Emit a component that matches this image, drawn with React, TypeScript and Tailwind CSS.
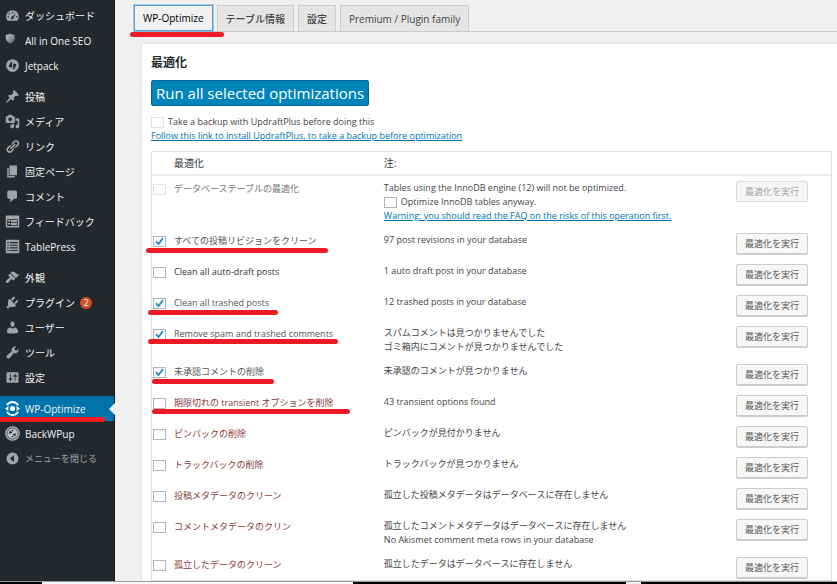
import React, { useState } from "react";

type MenuItem = {
  label: string;
  icon: React.ReactNode;
  badge?: number;
  active?: boolean;
  muted?: boolean;
};

type Optimization = {
  id: string;
  label: string;
  notes: string[];
  tone: string;
  mark?: string;
};

const Icon = ({ d }: { d: string }) => (
  <svg viewBox="0 0 20 20" className="size-[15px] shrink-0" fill="currentColor" fillRule="evenodd" aria-hidden="true">
    <path d={d} />
  </svg>
);

const menuGroups: MenuItem[][] = [
  [
    {
      label: "ダッシュボード",
      icon: (
        <Icon d="M3.8 17h12.4A8.3 8.3 0 0 0 18.5 11.5 8.5 8.5 0 0 0 1.5 11.5c0 2.1.9 4 2.3 5.5zM10 5a1 1 0 1 1 0 2 1 1 0 0 1 0-2zM5.8 6.8a1 1 0 1 1 0 2 1 1 0 0 1 0-2zM14.5 6.5l-3 6a1.8 1.8 0 1 1-1.7-1.2zM4.2 10.8a1 1 0 1 1 0 2 1 1 0 0 1 0-2zM15.8 10.8a1 1 0 1 1 0 2 1 1 0 0 1 0-2z" />
      ),
    },
    {
      label: "All in One SEO",
      icon: (
        <svg viewBox="0 0 20 20" className="size-[15px] shrink-0" aria-hidden="true">
          <defs>
            <linearGradient id="shield" x1="0" y1="0" x2="1" y2="1">
              <stop offset="0" stopColor="#c4c6c8" />
              <stop offset="1" stopColor="#5c6064" />
            </linearGradient>
          </defs>
          <path d="M1 2.5Q4 2.5 7 1Q10 2.5 13 2.5V7q0 4-6 7Q1 11 1 7z" fill="url(#shield)" />
        </svg>
      ),
    },
    {
      label: "Jetpack",
      icon: (
        <Icon d="M10 1.5a8.5 8.5 0 1 1 0 17 8.5 8.5 0 0 1 0-17zM9.3 4.5L7.6 5.5 5 10.8q-.4 1 .6 1.2l3.7.8zM10.8 15.5l1.6-1L15 9.2q.4-1-.6-1.2l-3.6-.8z" />
      ),
    },
  ],
  [
    {
      label: "投稿",
      icon: (
        <Icon d="M10.44 3.02l1.82-1.82 6.36 6.35-1.83 1.82c-1.05-.68-2.48-.57-3.41.36l-.75.75c-.92.93-1.04 2.35-.35 3.41l-1.83 1.82-2.41-2.41-2.8 2.79c-.42.42-3.38 2.71-3.8 2.29s1.86-3.39 2.28-3.81l2.79-2.79L4.1 9.36l1.83-1.82c1.05.69 2.48.57 3.4-.36l.75-.75c.93-.92 1.05-2.35.36-3.41z" />
      ),
    },
    {
      label: "メディア",
      icon: (
        <Icon d="M13 11V4c0-.55-.45-1-1-1h-1.67L9 1H5L3.67 3H2c-.55 0-1 .45-1 1v7c0 .55.45 1 1 1h10c.55 0 1-.45 1-1zM7 4.5c1.38 0 2.5 1.12 2.5 2.5S8.38 9.5 7 9.5 4.5 8.38 4.5 7 5.62 4.5 7 4.5zM14 6h5v10.5c0 1.38-1.12 2.5-2.5 2.5S14 17.88 14 16.5s1.12-2.5 2.5-2.5c.17 0 .34.02.5.05V9h-3V6zm-4 8.05V13h2v3.5c0 1.38-1.12 2.5-2.5 2.5S7 17.88 7 16.5 8.12 14 9.5 14c.17 0 .34.02.5.05z" />
      ),
    },
    {
      label: "リンク",
      icon: (
        <Icon d="M17.74 2.76c1.68 1.69 1.68 4.41 0 6.1l-1.53 1.52c-1.12 1.12-2.7 1.47-4.14 1.09l2.62-2.61.76-.77.76-.76c.84-.84.84-2.2 0-3.04-.84-.85-2.2-.85-3.04 0l-.77.76-3.38 3.38c-.37-1.44-.02-3.02 1.1-4.14l1.52-1.53c1.69-1.68 4.42-1.68 6.1 0zM8.59 13.43l5.34-5.34c.42-.42.42-1.1 0-1.52-.44-.43-1.13-.39-1.53 0l-5.33 5.34c-.42.42-.42 1.1 0 1.52.44.43 1.13.39 1.52 0zm-.76 2.29l4.14-4.15c.38 1.44.03 3.02-1.09 4.14l-1.52 1.53c-1.69 1.68-4.41 1.68-6.1 0-1.68-1.68-1.68-4.42 0-6.1l1.53-1.52c1.12-1.12 2.7-1.47 4.14-1.1l-4.14 4.15c-.85.84-.85 2.2 0 3.05.84.84 2.2.84 3.04 0z" />
      ),
    },
    { label: "固定ページ", icon: <Icon d="M6 15V2h10v13H6zm-1 1h8v2H3V5h2v11z" /> },
    {
      label: "コメント",
      icon: <Icon d="M5 2h9c1.1 0 2 .9 2 2v7c0 1.1-.9 2-2 2h-2l-5 5v-5H5c-1.1 0-2-.9-2-2V4c0-1.1.9-2 2-2z" />,
    },
    {
      label: "フィードバック",
      icon: (
        <Icon d="M2 2h16c.55 0 1 .45 1 1v14c0 .55-.45 1-1 1H2c-.55 0-1-.45-1-1V3c0-.55.45-1 1-1zm15 14V7H3v9h14zM4 8v2h3V8H4zm4 0v3h8V8H8zm-4 4v2h3v-2H4zm4 0v3h8v-3H8z" />
      ),
    },
    {
      label: "TablePress",
      icon: (
        <Icon d="M2 1h16l1 1v16l-1 1H2l-1-1V2zM3 4v1.5h2V4zM6.5 4v1.5H17V4zM3 7.5V9h2V7.5zM6.5 7.5V9H17V7.5zM3 11v1.5h2V11zM6.5 11v1.5H17V11zM3 14.5V16h2v-1.5zM6.5 14.5V16H17v-1.5z" />
      ),
    },
  ],
  [
    {
      label: "外観",
      icon: (
        <Icon d="M14.48 11.06L7.41 3.99l1.5-1.5c.5-.56 2.3-.47 3.51.32 1.21.8 1.43 1.28 2.91 2.1 1.18.64 2.45 1.26 4.45.85zm-.71.71L6.7 4.7 4.93 6.47c-.39.39-.39 1.02 0 1.41l1.06 1.06c.39.39.39 1.03 0 1.42-.6.6-1.43 1.11-2.21 1.69-.35.26-.7.53-1.01.84C1.43 14.23.4 16.08 1.4 17.07c.99 1 2.84-.03 4.18-1.36.31-.31.58-.66.85-1.02.57-.78 1.08-1.61 1.69-2.21.39-.39 1.02-.39 1.41 0l1.06 1.06c.39.39 1.02.39 1.41 0z" />
      ),
    },
    {
      label: "プラグイン",
      badge: 2,
      icon: (
        <Icon d="M13.11 4.36L9.87 7.6 8 5.73l3.24-3.24c.35-.34 1.05-.2 1.56.32.52.51.66 1.21.31 1.55zm-8 1.77l.91-1.12 9.01 9.01-1.19.84c-.71.71-2.63 1.16-3.82 1.16H6.14L4.9 17.26c-.59.59-1.54.59-2.12 0-.59-.58-.59-1.53 0-2.12l1.24-1.24v-3.88c0-1.13.4-3.19 1.09-3.89zm7.26 3.97l3.24-3.24c.34-.35 1.04-.21 1.55.31.52.51.66 1.21.31 1.55l-3.24 3.25z" />
      ),
    },
    {
      label: "ユーザー",
      icon: (
        <Icon d="M10 9.25c-2.27 0-2.73-3.44-2.73-3.44C7 4.02 7.82 2 9.97 2c2.16 0 2.98 2.02 2.71 3.81 0 0-.41 3.44-2.68 3.44zm0 2.57L12.72 10c2.39 0 4.52 2.33 4.52 4.53v2.49s-3.65 1.13-7.24 1.13c-3.65 0-7.24-1.13-7.24-1.13v-2.49c0-2.25 1.94-4.48 4.47-4.48z" />
      ),
    },
    {
      label: "ツール",
      icon: (
        <Icon d="M16.68 9.77c-1.34 1.34-3.3 1.67-4.95.99l-5.41 6.52c-.99.99-2.59.99-3.58 0s-.99-2.59 0-3.57l6.52-5.42c-.68-1.65-.35-3.61.99-4.95 1.28-1.28 3.12-1.62 4.72-1.06l-2.89 2.89 2.82 2.82 2.86-2.87c.53 1.58.18 3.39-1.08 4.65z" />
      ),
    },
    {
      label: "設定",
      icon: (
        <Icon d="M18 16V4c0-.55-.45-1-1-1H3c-.55 0-1 .45-1 1v12c0 .55.45 1 1 1h14c.55 0 1-.45 1-1zM8 11h1c.55 0 1 .45 1 1s-.45 1-1 1H8v1.5c0 .28-.22.5-.5.5s-.5-.22-.5-.5V13H6c-.55 0-1-.45-1-1s.45-1 1-1h1V5.5c0-.28.22-.5.5-.5s.5.22.5.5V11zm5-2h-1c-.55 0-1-.45-1-1s.45-1 1-1h1V5.5c0-.28.22-.5.5-.5s.5.22.5.5V7h1c.55 0 1 .45 1 1s-.45 1-1 1h-1v5.5c0 .28-.22.5-.5.5s-.5-.22-.5-.5V9z" />
      ),
    },
  ],
  [
    {
      label: "WP-Optimize",
      active: true,
      icon: (
        <svg viewBox="0 0 20 20" className="size-[15px] shrink-0" fill="none" stroke="currentColor" strokeWidth="2.4" aria-hidden="true">
          <path d="M2.5 5.5A8.8 8.8 0 0 1 17.5 5.5M17.5 14.5A8.8 8.8 0 0 1 2.5 14.5" />
          <path d="M0 10L5 6.2Q3.600 10 5 13.8zM20 10L15 6.2Q16.400 10 15 13.8z" fill="currentColor" stroke="none" />
          <circle cx="10" cy="10" r="3.4" fill="currentColor" stroke="none" />
        </svg>
      ),
    },
    {
      label: "BackWPup",
      icon: (
        <svg viewBox="0 0 20 20" className="size-[15px] shrink-0" aria-hidden="true">
          <circle cx="10" cy="10" r="9" fill="#6f7377" stroke="#b4b7ba" strokeWidth="1.5" />
          <circle cx="10" cy="10" r="6.5" fill="#c3c5c7" />
          <path d="M5 10.5L6.5 6l3.5 3zM8 5.5l3.5-.5-1 2.5zM15 9.5L13.5 14 10 11zM12 14.5l-3.5.5 1-2.5z" fill="#23282d" />
        </svg>
      ),
    },
    {
      label: "メニューを閉じる",
      muted: true,
      icon: <Icon d="M10 2a8 8 0 1 1 0 16 8 8 0 0 1 0-16zM12 5.5L6.5 10l5.5 4.5z" />,
    },
  ],
];

const tabs = ["WP-Optimize", "テーブル情報", "設定", "Premium / Plugin family"];

const optimizations: Optimization[] = [
  { id: "tables", label: "データベーステーブルの最適化", notes: ["Tables using the InnoDB engine (12) will not be optimized."], tone: "text-[#777]" },
  { id: "revisions", label: "すべての投稿リビジョンをクリーン", notes: ["97 post revisions in your database"], tone: "text-[#555]", mark: "top-[20px] -left-1.5 w-[182px]" },
  { id: "autodraft", label: "Clean all auto-draft posts", notes: ["1 auto draft post in your database"], tone: "text-[#333]" },
  { id: "trash", label: "Clean all trashed posts", notes: ["12 trashed posts in your database"], tone: "text-[#555]", mark: "top-[20px] -left-1 w-[130px]" },
  { id: "spam", label: "Remove spam and trashed comments", notes: ["スパムコメントは見つかりませんでした", "ゴミ箱内にコメントが見つかりませんでした"], tone: "text-[#555]", mark: "top-[18px] -left-1 w-[190px]" },
  { id: "unapproved", label: "未承認コメントの削除", notes: ["未承認のコメントが見つかりません"], tone: "text-[#555]", mark: "top-[20px] left-0 w-[122px]" },
  { id: "transient", label: "期限切れの transient オプションを削除", notes: ["43 transient options found"], tone: "text-[#8b3a3a]", mark: "top-[19px] left-0 w-[198px]" },
  { id: "pingbacks", label: "ピンバックの削除", notes: ["ピンバックが見付かりません"], tone: "text-[#8b3a3a]" },
  { id: "trackbacks", label: "トラックバックの削除", notes: ["トラックバックが見つかりません"], tone: "text-[#8b3a3a]" },
  { id: "postmeta", label: "投稿メタデータのクリーン", notes: ["孤立した投稿メタデータはデータベースに存在しません"], tone: "text-[#8b3a3a]" },
  { id: "commentmeta", label: "コメントメタデータのクリン", notes: ["孤立したコメントメタデータはデータベースに存在しません", "No Akismet comment meta rows in your database"], tone: "text-[#8b3a3a]" },
  { id: "orphandata", label: "孤立したデータのクリーン", notes: ["孤立したデータはデータベースに存在しません"], tone: "text-[#8b3a3a]" },
];

type CheckProps = {
  id: string;
  checked: boolean;
  onChange: () => void;
  faded?: boolean;
};

const Check = ({ id, checked, onChange, faded }: CheckProps) => (
  <span className="relative flex shrink-0">
    <input
      id={id}
      type="checkbox"
      checked={checked}
      disabled={faded}
      onChange={onChange}
      className="h-[11px] w-[13px] appearance-none border border-[#b0b4b8] bg-white disabled:border-[#e4e4e4]"
    />
    {checked && (
      <svg viewBox="0 0 13 11" className="pointer-events-none absolute inset-0 size-full" fill="none" stroke="#1e8cbe" strokeWidth="1.8" aria-hidden="true">
        <path d="M3 5.2L5.5 8L10 2" />
      </svg>
    )}
  </span>
);

export default function App() {
  const [selected, setSelected] = useState<string[]>(["revisions", "trash", "spam", "unapproved"]);
  const [activeTab, setActiveTab] = useState("WP-Optimize");
  const [forceInnoDB, setForceInnoDB] = useState(false);

  const toggle = (id: string) => {
    setSelected((prev) => (prev.includes(id) ? prev.filter((s) => s !== id) : [...prev, id]));
  };

  return (
    <div className="flex min-h-screen flex-col bg-[#f0f0f0] font-['Open_Sans','Noto_Sans_CJK_JP',sans-serif] text-[9px] leading-[14px] text-[#444]">
      <div className="flex flex-1">
        {/* Admin menu */}
        <nav className="flex w-[115px] shrink-0 flex-col gap-1.5 border-r border-[#15181b] bg-[#23282d] pt-[3px]">
          {menuGroups.map((group, i) => (
            <ul key={i}>
              {group.map((item) => (
                <li key={item.label} className="relative">
                  <a
                    href="#"
                    className={`flex h-[25px] items-center gap-[5px] pl-[5px] whitespace-nowrap ${
                      item.active ? "bg-[#0073aa] text-white" : "text-[#a0a5aa]"
                    }`}
                  >
                    {item.icon}
                    <span className={item.muted ? "text-[9px] text-[#a0a5aa]" : "text-[10px] text-[#f3f3f3]"}>
                      {item.label}
                    </span>
                    {item.badge && (
                      <span className="flex size-3 items-center justify-center rounded-full bg-[#d54e21] text-[9px] text-white">
                        {item.badge}
                      </span>
                    )}
                  </a>
                  {item.active && (
                    <>
                      <span className="absolute top-[7px] right-[-1px] border-y-[6px] border-r-[6px] border-y-transparent border-r-[#f0f0f0]" />
                      <span className="absolute top-[21px] left-0 h-[5px] w-[105px] rounded-r-full bg-[#ed1c24]" />
                    </>
                  )}
                </li>
              ))}
            </ul>
          ))}
        </nav>

        <main className="min-w-0 flex-1">
          {/* Tabs */}
          <div className="relative ml-[19px] flex h-8 items-end gap-1 border-b border-[#ccc]">
            {tabs.map((tab) => (
              <button
                key={tab}
                type="button"
                onClick={() => setActiveTab(tab)}
                className={`h-[26px] border px-2 text-[10px] font-medium whitespace-nowrap ${
                  activeTab === tab
                    ? "border-[#5b9dd9] bg-[#f1f1f1] text-black ring-1 ring-[#5b9dd9]/50"
                    : "border-b-0 border-[#ccc] bg-[#e5e5e5] text-[#444]"
                }`}
              >
                {tab}
              </button>
            ))}
            <span className="absolute top-8 -left-1 h-[5px] w-[94px] rounded-full bg-[#ed1c24]" />
          </div>

          <section className="mt-[11px] ml-[26px] h-[calc(100%-43px)] border-t border-l border-[#e5e5e5] bg-white pt-2.5 pr-[5px] pl-[9px]">
            <h3 className="text-[12px] leading-[18px] font-semibold text-[#23282d]">最適化</h3>
            <button
              type="button"
              className="mt-2 flex h-[26px] items-center rounded-xs border border-[#006799] bg-[#0085ba] px-1 text-[15px] text-white"
            >
              Run all selected optimizations
            </button>
            <div className="mt-[9px] flex items-center gap-1">
              <Check id="backup" checked={false} onChange={() => {}} faded />
              <label htmlFor="backup">Take a backup with UpdraftPlus before doing this</label>
            </div>
            <a href="#" className="block text-[#0073aa] underline">
              Follow this link to install UpdraftPlus, to take a backup before optimization
            </a>

            {/* Optimizations */}
            <table className="mt-2 w-full table-fixed border-separate border-spacing-0 border border-[#e1e1e1]">
              <thead className="text-left text-[10px] text-[#32373c]">
                <tr className="h-6">
                  <th className="w-[34%] border-b-2 border-[#ececec] pl-[22px] font-normal">最適化</th>
                  <th className="border-b-2 border-[#ececec] pl-px font-normal">注:</th>
                  <th className="w-[95px] border-b-2 border-[#ececec]" />
                </tr>
              </thead>
              <tbody>
                {optimizations.map((item) => {
                  const disabled = item.id === "tables";
                  return (
                    <tr key={item.id} className="group align-top">
                      <td className="relative pt-1.5 pl-px">
                        <div className="flex items-center gap-2 whitespace-nowrap">
                          <Check
                            id={item.id}
                            checked={selected.includes(item.id)}
                            onChange={() => toggle(item.id)}
                            faded={disabled}
                          />
                          <label htmlFor={item.id} className={item.tone}>
                            {item.label}
                          </label>
                        </div>
                        {item.mark && (
                          <span className={`pointer-events-none absolute h-[5px] rounded-full bg-[#ed1c24] ${item.mark}`} />
                        )}
                      </td>
                      <td className="py-[5px] pl-px group-last:pb-0.5">
                        {item.notes.map((note) => (
                          <p key={note}>{note}</p>
                        ))}
                        {disabled && (
                          <>
                            <div className="flex items-center gap-1">
                              <Check id="innodb" checked={forceInnoDB} onChange={() => setForceInnoDB(!forceInnoDB)} />
                              <label htmlFor="innodb">Optimize InnoDB tables anyway.</label>
                            </div>
                            <a href="#" className="block text-[#0073aa] underline">
                              Warning: you should read the FAQ on the risks of this operation first.
                            </a>
                          </>
                        )}
                      </td>
                      <td className="py-[5px] group-last:pb-0.5">
                        <button
                          type="button"
                          disabled={disabled}
                          className="block h-[21px] w-[72px] rounded-xs border border-[#ccc] bg-[#f7f7f7] text-[#555] shadow-[0_1px_0_#ccc] disabled:border-[#ddd] disabled:text-[#a0a5aa] disabled:shadow-none"
                        >
                          最適化を実行
                        </button>
                      </td>
                    </tr>
                  );
                })}
              </tbody>
            </table>
          </section>
        </main>
      </div>

      {/* Bottom edge */}
      <div className="flex h-[3px] border-t border-[#999]">
        <div className="w-[42px] bg-black" />
        <div className="flex-[311] bg-[#f8f8f8]" />
        <div className="flex-[273] bg-black" />
        <div className="w-[15px] bg-[#f0f0f0]" />
        <div className="flex-[196] bg-black" />
      </div>
    </div>
  );
}
